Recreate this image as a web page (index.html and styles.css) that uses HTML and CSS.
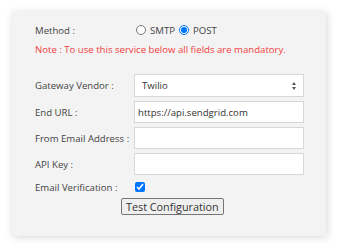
FILE: index.html
```
<!DOCTYPE html>
<html lang="en">
<head>
    <meta charset="UTF-8">
    <title>Gateway Settings</title>
    <link rel="stylesheet" href="styles.css">
</head>
<body>
    <div class="panel">
        <div class="row method-row">
            <span class="label">Method :</span>
            <label class="radio"><input type="radio" name="method" value="smtp">SMTP</label>
            <label class="radio"><input type="radio" name="method" value="post" checked>POST</label>
        </div>
        <p class="note">Note : To use this service below all fields are mandatory.</p>
        <form class="fields">
            <label class="label" for="vendor">Gateway Vendor :</label>
            <div class="select-wrap">
                <select id="vendor" class="field">
                    <option>Twilio</option>
                </select>
                <span class="select-arrows"></span>
            </div>
            <label class="label" for="url">End URL :</label>
            <input type="text" id="url" class="field" value="https://api.sendgrid.com">
            <label class="label" for="from">From Email Address :</label>
            <input type="text" id="from" class="field">
            <label class="label" for="apikey">API Key :</label>
            <input type="text" id="apikey" class="field">
            <label class="label" for="verify">Email Verification :</label>
            <div class="check"><input type="checkbox" id="verify" checked></div>
        </form>
        <div class="actions">
            <button type="button" class="test-btn">Test Configuration</button>
        </div>
    </div>
</body>
</html>
```

FILE: styles.css
```
body {
    margin: 0;
    padding: 12px;
    background-color: #fff;
    font-family: 'Open Sans', sans-serif;
    font-size: 9.6px;
    color: #444;
}
.panel {
    width: 314px;
    height: 224px;
    box-sizing: border-box;
    background: #f3f3f3;
    box-shadow: 1px 1px 8px rgba(0, 0, 0, 0.16);
    padding: 12px 22px 0 23px;
}
.row {
    display: flex;
    align-items: center;
    height: 12px;
}
.method-row .label {
    width: 100px;
}
.radio {
    display: flex;
    align-items: center;
    margin-right: 3px;
}
.radio input {
    width: 10px;
    height: 10px;
    margin: 0 4px 0 1px;
}
.note {
    margin: 7px 0 0;
    line-height: 13px;
    color: #f04040;
}
.fields {
    display: grid;
    grid-template-columns: 99px 170px;
    grid-template-rows: 23px 22px 22px 22px 16px;
    row-gap: 4px;
    align-items: center;
    margin-top: 18px;
}
.field {
    width: 100%;
    height: 22px;
    box-sizing: border-box;
    border: 1px solid #d8d8d8;
    background: #fff;
    font-family: 'Open Sans', sans-serif;
    font-size: 9.6px;
    color: #333;
    padding: 0 3px;
    border-radius: 0;
    outline: none;
}
.select-wrap {
    position: relative;
    height: 23px;
}
select.field {
    height: 23px;
    appearance: none;
    -webkit-appearance: none;
    padding-left: 7px;
}
.select-arrows {
    position: absolute;
    right: 7px;
    top: 8px;
    width: 5px;
    height: 8px;
    pointer-events: none;
}
.select-arrows::before,
.select-arrows::after {
    content: "";
    position: absolute;
    left: 0;
    border-left: 2.5px solid transparent;
    border-right: 2.5px solid transparent;
}
.select-arrows::before {
    top: 0;
    border-bottom: 3px solid #555;
}
.select-arrows::after {
    bottom: 0;
    border-top: 3px solid #555;
}
.check {
    display: flex;
    align-items: center;
}
.check input {
    width: 10px;
    height: 10px;
    margin: 0 0 0 1px;
}
.actions {
    display: flex;
    padding-left: 86px;
    margin-top: 3px;
}
.test-btn {
    font-family: 'Open Sans', sans-serif;
    font-size: 10.8px;
    color: #333;
    background: #efefef;
    border: 1px solid #767676;
    border-radius: 2px;
    padding: 0 4px;
    height: 17px;
    line-height: 15px;
}
```
